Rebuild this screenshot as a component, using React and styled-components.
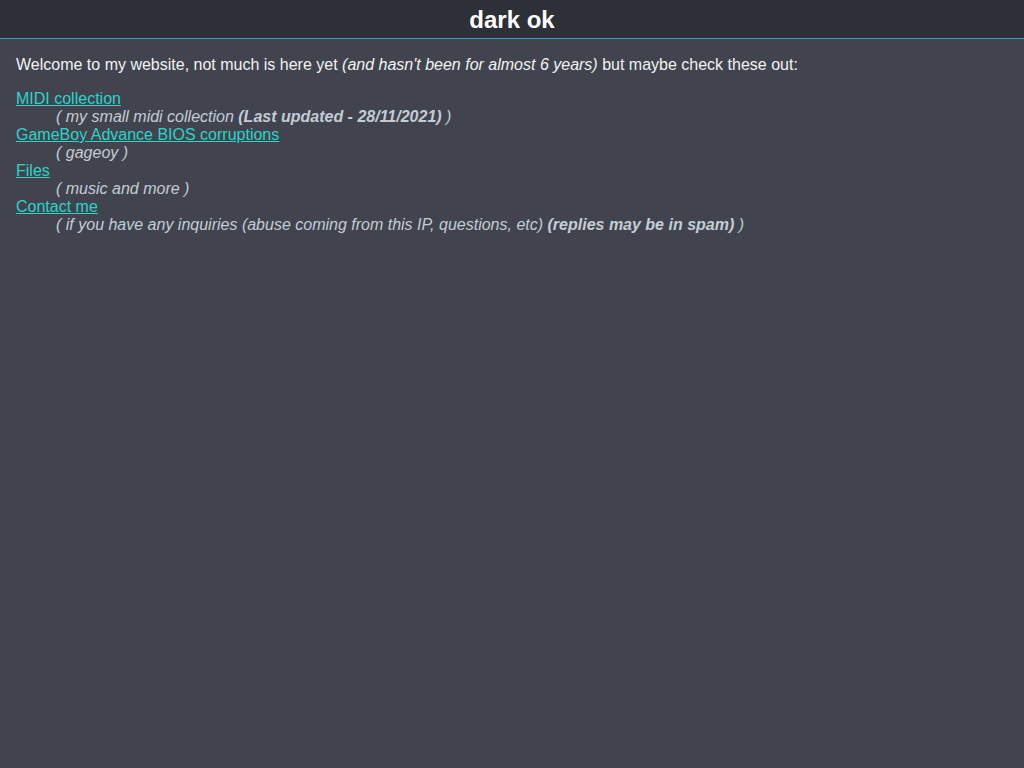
import React from 'react';
import styled, { createGlobalStyle } from 'styled-components';

const links = [
  { href: '#midi', label: 'MIDI collection', note: 'my small midi collection', extra: '(Last updated - 28/11/2021)' },
  { href: '#gba', label: 'GameBoy Advance BIOS corruptions', note: 'gageoy' },
  { href: '#files', label: 'Files', note: 'music and more' },
  {
    href: '#contact',
    label: 'Contact me',
    note: 'if you have any inquiries (abuse coming from this IP, questions, etc)',
    extra: '(replies may be in spam)',
  },
];

function App() {
  return (
    <>
      <GlobalStyle />
      <Header>
        <Title>dark ok</Title>
      </Header>
      <Main>
        <Intro>
          Welcome to my website, not much is here yet <em>(and hasn't been for almost 6 years)</em> but maybe check
          these out:
        </Intro>
        <LinkList>
          {links.map((item) => (
            <React.Fragment key={item.href}>
              <dt>
                <LinkItem href={item.href}>{item.label}</LinkItem>
              </dt>
              <Note>
                ( {item.note} {item.extra && <b>{item.extra}</b>} )
              </Note>
            </React.Fragment>
          ))}
        </LinkList>
      </Main>
    </>
  );
}

export default App;

const GlobalStyle = createGlobalStyle`
  html, body {
    margin: 0;
    min-height: 100%;
    background: #41444f;
  }
  body {
    font-family: "Liberation Sans", Arial, sans-serif;
    font-size: 16px;
    color: #ffffff;
    min-height: 768px;
  }
`;

const Header = styled.header`
  height: 38px;
  background: #2e3037;
  border-bottom: 1px solid #3a9dc8;
  display: flex;
  align-items: center;
  justify-content: center;
`;

const Title = styled.h1`
  margin: 1px 0 0;
  font-size: 24px;
  font-weight: bold;
  color: #ffffff;
`;

const Main = styled.main`
  padding: 1px 16px 0;
`;

const Intro = styled.p`
  margin: 16px 0;
  color: #f2f2f2;
`;

const LinkList = styled.dl`
  margin: 0;
`;

const LinkItem = styled.a`
  color: #2ad4c8;
  text-decoration: underline;
`;

const Note = styled.dd`
  margin-left: 40px;
  font-style: italic;
  color: #c4ccd6;
`;
